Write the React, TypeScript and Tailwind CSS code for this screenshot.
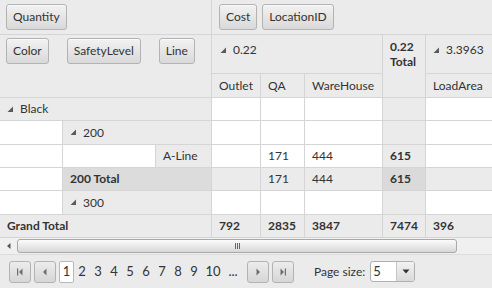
import type { ReactNode } from 'react';

const Tri = () => (
  <svg width="7" height="7" viewBox="0 0 7 7" className="mr-[6px] shrink-0">
    <polygon points="6,0.5 6,6 0.5,6" fill="#5a5a5a" />
  </svg>
);

const Btn = ({ children }: { children: ReactNode }) => (
  <div className="h-[26px] px-[6px] flex items-center rounded-[3px] border border-[#b3b3b3] bg-gradient-to-b from-[#f2f2f2] to-[#d9d9d9] text-[#333] shadow-[inset_0_1px_0_#fafafa]">
    {children}
  </div>
);

type Cell = { w: string; bg: string; text?: ReactNode; bold?: boolean; tri?: boolean };

const line = 'border-r border-[#d5d5d5]';

const dataCols = ['w-[49px]', 'w-[44px]', 'w-[78px]', 'w-[43px]', 'flex-1'];

function row(left: Cell[], data: (string | null)[], opts: { h: string; gray?: boolean; bold?: boolean; dark?: boolean }) {
  return (
    <div className={`flex ${opts.h} border-b border-[#d5d5d5]`}>
      {left.map((c, i) => (
        <div key={i} className={`${c.w} ${c.bg} ${line} flex items-center pl-[7px] ${c.bold ? 'font-bold' : ''}`}>
          {c.tri && <Tri />}
          {c.text}
        </div>
      ))}
      {data.map((d, i) => {
        const isTotal = i === 3;
        const bg = isTotal ? (opts.dark ? 'bg-[#dadada]' : 'bg-[#ebebeb]') : opts.gray ? 'bg-[#ebebeb]' : 'bg-white';
        const bold = opts.bold || isTotal;
        return (
          <div key={i} className={`${dataCols[i]} ${bg} ${i < 4 ? line : ''} flex items-center pl-[7px] ${bold ? 'font-bold' : ''}`}>
            {d}
          </div>
        );
      })}
    </div>
  );
}

const PagerBtn = ({ kind }: { kind: 'first' | 'prev' | 'next' | 'last' }) => (
  <div className="w-[22px] h-[22px] rounded-[3px] border border-[#b3b3b3] bg-gradient-to-b from-[#ececec] to-[#d6d6d6] flex items-center justify-center">
    <svg width="10" height="10" viewBox="0 0 10 10">
      {kind === 'first' && (
        <>
          <rect x="2" y="1.5" width="1.2" height="7" fill="#6e6e6e" />
          <polygon points="7.5,1.5 7.5,8.5 4,5" fill="#6e6e6e" />
        </>
      )}
      {kind === 'prev' && <polygon points="6.5,1.5 6.5,8.5 3,5" fill="#6e6e6e" />}
      {kind === 'next' && <polygon points="3.5,1.5 3.5,8.5 7,5" fill="#6e6e6e" />}
      {kind === 'last' && (
        <>
          <polygon points="2.5,1.5 2.5,8.5 6,5" fill="#6e6e6e" />
          <rect x="6.8" y="1.5" width="1.2" height="7" fill="#6e6e6e" />
        </>
      )}
    </svg>
  </div>
);

export default function App() {
  return (
    <div className="w-[492px] h-[288px] overflow-hidden bg-white font-[Lato,sans-serif] text-[12px] text-[#333]">
      {/* field area: data fields */}
      <div className="flex h-[35px] border-b border-[#d5d5d5] bg-[#ebebeb]">
        <div className={`w-[212px] ${line} flex items-center pl-[6px]`}>
          <Btn>Quantity</Btn>
        </div>
        <div className="flex-1 flex items-center gap-[5px] pl-[7px]">
          <Btn>Cost</Btn>
          <Btn>LocationID</Btn>
        </div>
      </div>

      {/* row fields + column headers */}
      <div className="flex h-[63px] border-b border-[#d5d5d5] bg-[#ebebeb]">
        <div className={`w-[212px] ${line} flex items-start gap-[18px] pl-[6px] pt-[3px]`}>
          <Btn>Color</Btn>
          <Btn>SafetyLevel</Btn>
          <Btn>Line</Btn>
        </div>
        <div className={`w-[171px] ${line} flex flex-col`}>
          <div className="h-[39px] border-b border-[#d5d5d5] flex items-start pt-[6px] pl-[8px]">
            <div className="flex items-center">
              <Tri />
              0.22
            </div>
          </div>
          <div className="flex-1 flex items-center">
            <div className={`w-[49px] h-full ${line} flex items-center pl-[7px]`}>Outlet</div>
            <div className={`w-[44px] h-full ${line} flex items-center pl-[7px]`}>QA</div>
            <div className="flex-1 h-full flex items-center pl-[7px]">WareHouse</div>
          </div>
        </div>
        <div className={`w-[43px] ${line} pl-[7px] pt-[4px] font-bold leading-[15px]`}>
          0.22
          <br />
          Total
        </div>
        <div className="flex-1 flex flex-col">
          <div className="h-[39px] border-b border-[#d5d5d5] flex items-start pt-[6px] pl-[7px]">
            <div className="flex items-center">
              <Tri />
              3.3963
            </div>
          </div>
          <div className="flex-1 flex items-center pl-[7px]">LoadArea</div>
        </div>
      </div>

      {/* body */}
      {row([{ w: 'w-[212px]', bg: 'bg-[#ebebeb]', text: 'Black', tri: true }], [null, null, null, null, null], { h: 'h-[23px]' })}
      {row(
        [
          { w: 'w-[63px]', bg: 'bg-white' },
          { w: 'w-[149px]', bg: 'bg-[#ebebeb]', text: '200', tri: true },
        ],
        [null, null, null, null, null],
        { h: 'h-[24px]' }
      )}
      {row(
        [
          { w: 'w-[63px]', bg: 'bg-white' },
          { w: 'w-[93px]', bg: 'bg-white' },
          { w: 'w-[56px]', bg: 'bg-[#ebebeb]', text: 'A-Line' },
        ],
        [null, '171', '444', '615', null],
        { h: 'h-[23px]' }
      )}
      {row(
        [
          { w: 'w-[63px]', bg: 'bg-white' },
          { w: 'w-[149px]', bg: 'bg-[#dcdcdc]', text: '200 Total', bold: true },
        ],
        [null, '171', '444', '615', null],
        { h: 'h-[23px]', gray: true, dark: true }
      )}
      {row(
        [
          { w: 'w-[63px]', bg: 'bg-white' },
          { w: 'w-[149px]', bg: 'bg-[#ebebeb]', text: '300', tri: true },
        ],
        [null, null, null, null, null],
        { h: 'h-[24px]' }
      )}
      {row(
        [{ w: 'w-[212px]', bg: 'bg-[#ebebeb]', text: 'Grand Total', bold: true }],
        ['792', '2835', '3847', '7474', '396'],
        { h: 'h-[23px]', gray: true, bold: true }
      )}

      {/* horizontal scrollbar */}
      <div className="flex h-[17px] bg-[#f0f0f0] border-b border-[#dcdcdc]">
        <div className="w-[17px] flex items-center justify-center">
          <svg width="6" height="8" viewBox="0 0 6 8">
            <polygon points="4.5,1 4.5,7 1,4" fill="#555" />
          </svg>
        </div>
        <div className="w-[440px] my-[1px] rounded-[3px] border border-[#a9a9a9] bg-gradient-to-b from-[#fbfbfb] to-[#d8d8d8] flex items-center justify-center">
          <div className="flex gap-[1px]">
            <div className="w-[1px] h-[6px] bg-[#666]" />
            <div className="w-[1px] h-[6px] bg-[#666]" />
            <div className="w-[1px] h-[6px] bg-[#666]" />
          </div>
        </div>
        <div className="flex-1" />
      </div>

      {/* pager */}
      <div className="flex items-center h-[33px] bg-[#ebebeb] pl-[9px]">
        <PagerBtn kind="first" />
        <div className="w-[3px]" />
        <PagerBtn kind="prev" />
        <div className="w-[3px]" />
        <div className="w-[15px] h-[22px] bg-white border border-[#b9b9b9] rounded-[2px] flex items-center justify-center text-[13px]">1</div>
        {['2', '3', '4', '5', '6', '7', '8', '9'].map((n) => (
          <div key={n} className="w-[16px] text-center text-[13px]">
            {n}
          </div>
        ))}
        <div className="w-[22px] text-center text-[13px]">10</div>
        <div className="w-[18px] text-center text-[13px]">...</div>
        <div className="w-[5px]" />
        <PagerBtn kind="next" />
        <div className="w-[3px]" />
        <PagerBtn kind="last" />
        <div className="ml-[20px] text-[12px]">Page size:</div>
        <div className="ml-[5px] w-[45px] h-[21px] bg-white border border-[#b0b0b0] rounded-[3px] flex">
          <div className="flex-1 pl-[2px] flex items-center text-[13px]">5</div>
          <div className="w-[18px] border-l border-[#c6c6c6] bg-gradient-to-b from-[#f2f2f2] to-[#dadada] rounded-r-[2px] flex items-center justify-center">
            <svg width="8" height="5" viewBox="0 0 8 5">
              <polygon points="0.5,0.5 7.5,0.5 4,4.5" fill="#333" />
            </svg>
          </div>
        </div>
      </div>
    </div>
  );
}
